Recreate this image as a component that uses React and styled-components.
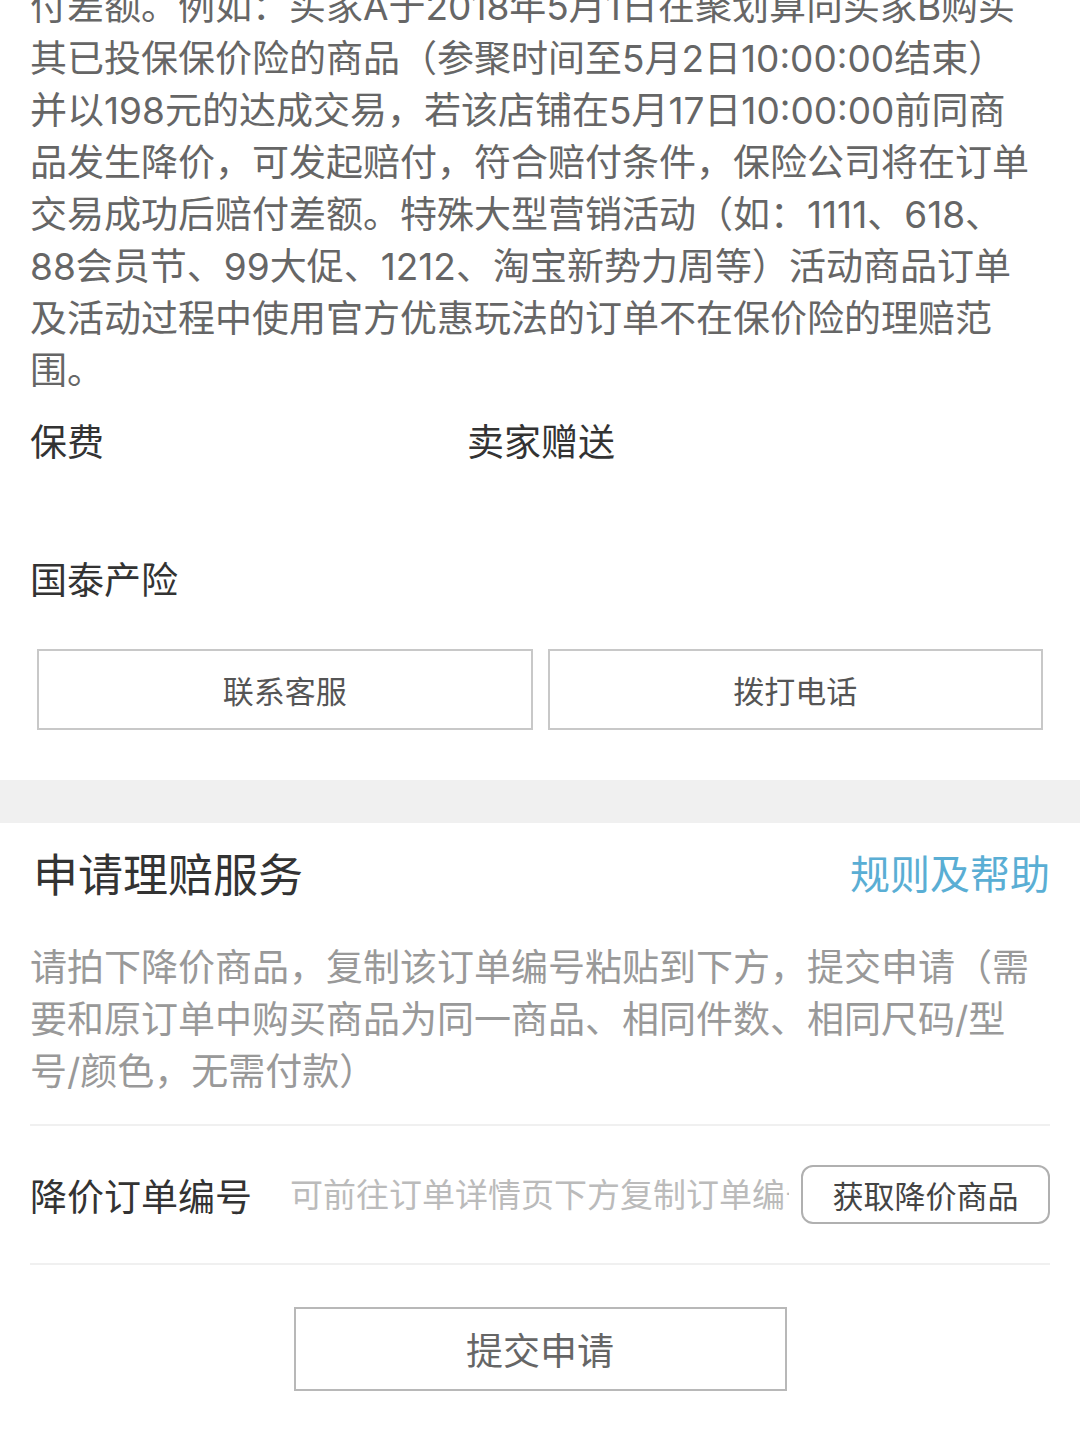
import React from "react";
import styled, { createGlobalStyle } from "styled-components";

const GlobalStyle = createGlobalStyle`
  html, body {
    margin: 0;
    padding: 0;
    background: #fff;
  }
  body {
    font-family: Inter, "Noto Sans CJK SC", "Noto Sans", sans-serif;
    overflow: hidden;
  }
`;

const Page = styled.div`
  width: 1080px;
  height: 1439px;
  overflow: hidden;
  background: #fff;
`;

const Section = styled.div`
  padding: 0 30px;
`;

const Intro = styled.div`
  margin-top: -19px;
  color: #666;
  font-size: 37px;
  line-height: 52px;
`;

const Line = styled.div`
  white-space: nowrap;
`;

const InfoRow = styled.div`
  display: flex;
  align-items: center;
  height: 52px;
  margin-top: ${(p) => p.top}px;
  font-size: 37px;
  color: #333;
`;

const InfoLabel = styled.div`
  width: 437px;
`;

const ButtonRow = styled.div`
  display: flex;
  gap: 15px;
  padding: 0 7px;
  margin-top: 45px;
`;

const OutlineBtn = styled.button`
  flex: 1;
  height: 81px;
  border: 2px solid #c8c8c8;
  background: #fff;
  color: #555;
  font-family: inherit;
  font-size: 31px;
  padding: 0;
`;

const Band = styled.div`
  height: 43px;
  background: #f0f0f0;
  margin-top: 50px;
`;

const TitleRow = styled.div`
  display: flex;
  justify-content: space-between;
  align-items: center;
  height: 60px;
  margin-top: 19px;
  padding-left: 3px;
`;

const Title = styled.h2`
  margin: 0;
  font-size: 45px;
  font-weight: 400;
  color: #333;
`;

const HelpLink = styled.a`
  font-size: 40px;
  color: #5aaed4;
  text-decoration: none;
`;

const Note = styled.div`
  margin-top: 40px;
  color: #999;
  font-size: 37px;
  line-height: 52px;
`;

const Divider = styled.div`
  height: 2px;
  background: #f0f0f0;
  margin-top: ${(p) => p.top || 0}px;
`;

const OrderRow = styled.div`
  display: flex;
  align-items: center;
  height: 137px;
`;

const OrderLabel = styled.div`
  flex: none;
  font-size: 37px;
  color: #333;
  width: 260px;
`;

const OrderInput = styled.input`
  flex: 1;
  min-width: 0;
  border: none;
  outline: none;
  padding: 0;
  margin-right: 12px;
  font-family: inherit;
  font-size: 33px;
  color: #333;
  background: transparent;
  &::placeholder {
    color: #bbb;
  }
`;

const FetchBtn = styled.button`
  flex: none;
  width: 249px;
  height: 59px;
  border: 2px solid #b0b0b0;
  border-radius: 12px;
  background: #fff;
  color: #444;
  font-family: inherit;
  font-size: 31px;
  padding: 0;
`;

const SubmitWrap = styled.div`
  display: flex;
  justify-content: center;
  margin-top: 42px;
`;

const SubmitBtn = styled.button`
  width: 493px;
  height: 84px;
  border: 2px solid #b8b8b8;
  background: #fff;
  color: #666;
  font-family: inherit;
  font-size: 37px;
  padding: 0;
`;

const introLines = [
  "付差额。例如：买家A于2018年5月1日在聚划算向买家B购买",
  "其已投保保价险的商品（参聚时间至5月2日10:00:00结束）",
  "并以198元的达成交易，若该店铺在5月17日10:00:00前同商",
  "品发生降价，可发起赔付，符合赔付条件，保险公司将在订单",
  "交易成功后赔付差额。特殊大型营销活动（如：1111、618、",
  "88会员节、99大促、1212、淘宝新势力周等）活动商品订单",
  "及活动过程中使用官方优惠玩法的订单不在保价险的理赔范",
  "围。",
];

const noteLines = [
  "请拍下降价商品，复制该订单编号粘贴到下方，提交申请（需",
  "要和原订单中购买商品为同一商品、相同件数、相同尺码/型",
  "号/颜色，无需付款）",
];

const App = () => {
  return (
    <Page>
      <GlobalStyle />
      <Section>
        <Intro>
          {introLines.map((l, i) => (
            <Line key={i}>{l}</Line>
          ))}
        </Intro>
        <InfoRow top={17}>
          <InfoLabel>保费</InfoLabel>
          <div>卖家赠送</div>
        </InfoRow>
        <InfoRow top={86}>
          <InfoLabel>国泰产险</InfoLabel>
        </InfoRow>
        <ButtonRow>
          <OutlineBtn>联系客服</OutlineBtn>
          <OutlineBtn>拨打电话</OutlineBtn>
        </ButtonRow>
      </Section>
      <Band />
      <Section>
        <TitleRow>
          <Title>申请理赔服务</Title>
          <HelpLink>规则及帮助</HelpLink>
        </TitleRow>
        <Note>
          {noteLines.map((l, i) => (
            <Line key={i}>{l}</Line>
          ))}
        </Note>
        <Divider top={26} />
        <OrderRow>
          <OrderLabel>降价订单编号</OrderLabel>
          <OrderInput placeholder="可前往订单详情页下方复制订单编号" />
          <FetchBtn>获取降价商品</FetchBtn>
        </OrderRow>
        <Divider />
        <SubmitWrap>
          <SubmitBtn>提交申请</SubmitBtn>
        </SubmitWrap>
      </Section>
    </Page>
  );
};

export default App;
